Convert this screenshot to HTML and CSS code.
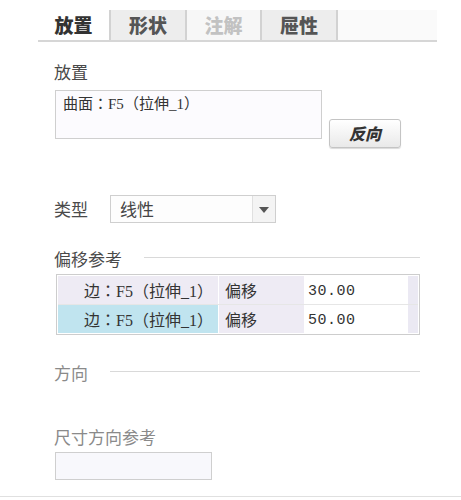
FILE: index.html
```html
<!DOCTYPE html>
<html>
<head>
<meta charset="utf-8">
<link rel="stylesheet" href="styles.css">
</head>
<body>
<div class="panel">
  <div class="tabs">
    <div class="tab active">放置</div>
    <div class="tab grey">形状</div>
    <div class="tab disabled">注解</div>
    <div class="tab grey">屉性</div>
    <div class="tab-fill"></div>
  </div>

  <div class="label top-label">放置</div>
  <div class="place-row">
    <div class="collector">曲面<span class="jp">：</span><span class="lat">F5</span><span class="jp">（</span>拉伸<span class="lat">_1</span><span class="jp">）</span></div>
    <div class="btn">反向</div>
  </div>

  <div class="type-row">
    <span class="label">类型</span>
    <div class="select">
      <span class="select-text">线性</span>
      <span class="select-arrow"></span>
    </div>
  </div>

  <div class="group-head"><span class="label">偏移参考</span><span class="rule"></span></div>
  <div class="table">
    <div class="row">
      <div class="c1">边<span class="jp">：</span><span class="lat">F5</span><span class="jp">（</span>拉伸<span class="lat">_1</span><span class="jp">）</span></div>
      <div class="c2">偏移</div>
      <div class="c3">30.00</div>
      <div class="c4"></div>
    </div>
    <div class="row">
      <div class="c1 sel">边<span class="jp">：</span><span class="lat">F5</span><span class="jp">（</span>拉伸<span class="lat">_1</span><span class="jp">）</span></div>
      <div class="c2">偏移</div>
      <div class="c3">50.00</div>
      <div class="c4"></div>
    </div>
  </div>

  <div class="group-head dir"><span class="label light">方向</span><span class="rule"></span></div>

  <div class="label light dim-label">尺寸方向参考</div>
  <div class="dim-box"></div>
</div>
<div class="bottom-line"></div>
</body>
</html>
```

FILE: styles.css
```css
html, body {
  margin: 0;
  padding: 0;
  background: #ffffff;
}
body {
  width: 461px;
  height: 500px;
  position: relative;
  font-family: "Noto Sans CJK SC", "Noto Sans", sans-serif;
  color: #444;
}
.panel {
  padding-left: 38px;
  padding-top: 10px;
  width: 400px;
}
.tabs {
  display: flex;
  height: 30px;
  border-bottom: 2px solid #d6d6d6;
  width: 399px;
}
.tab {
  height: 30px;
  line-height: 30px;
  font-size: 19px;
  font-weight: 900;
  text-align: center;
  color: #333;
  box-sizing: border-box;
}
.tab.active {
  width: 73px;
  background: #fff;
  border-right: 2px solid #d2d2d2;
}
.tab.grey {
  width: 76px;
  background: #ededed;
  color: #555;
  border-right: 2px solid #d2d2d2;
}
.tab.disabled {
  width: 75px;
  background: #f7f7f7;
  color: #c2c2c2;
  border-right: 2px solid #d2d2d2;
}
.tab-fill {
  flex: 1;
  background: #fafafa;
}
.label {
  font-size: 17px;
  line-height: 20px;
  color: #4a4a4a;
}
.label.light {
  color: #8a8a8a;
}
.jp {
  font-family: "Noto Sans CJK JP", sans-serif;
}
.lat {
  font-family: "Liberation Serif", serif;
}
.top-label {
  margin-top: 20px;
  padding-left: 16px;
}
.place-row {
  display: flex;
  align-items: flex-start;
  margin-top: 8px;
  padding-left: 17px;
}
.collector {
  width: 267px;
  height: 49px;
  box-sizing: border-box;
  border: 1px solid #cfcfcf;
  background: #fcfbfe;
  font-size: 15px;
  line-height: 20px;
  padding: 2px 7px;
  color: #333;
}
.btn {
  margin-left: 7px;
  margin-top: 29px;
  width: 72px;
  height: 29px;
  box-sizing: border-box;
  border: 1px solid #c4c4c4;
  border-radius: 3px;
  background: linear-gradient(#ffffff, #e9e9e9);
  box-shadow: 0 1px 1px rgba(0,0,0,0.15);
  font-size: 16px;
  font-weight: 900;
  font-style: italic;
  text-align: center;
  line-height: 27px;
  color: #333;
}
.type-row {
  display: flex;
  align-items: center;
  margin-top: 47px;
  padding-left: 16px;
  height: 28px;
}
.select {
  margin-left: 22px;
  width: 166px;
  height: 28px;
  box-sizing: border-box;
  border: 1px solid #cfcfcf;
  display: flex;
  background: #fdfdfd;
}
.select-text {
  flex: 1;
  font-size: 17px;
  line-height: 26px;
  padding-left: 9px;
  color: #444;
}
.select-arrow {
  width: 22px;
  border-left: 1px solid #e0e0e0;
  background: #f4f4f4;
  position: relative;
}
.select-arrow::after {
  content: "";
  position: absolute;
  left: 6px;
  top: 11px;
  border-left: 5px solid transparent;
  border-right: 5px solid transparent;
  border-top: 6px solid #555;
}
.group-head {
  display: flex;
  align-items: center;
  margin-top: 26px;
  padding-left: 16px;
  width: 366px;
}
.group-head .rule {
  flex: 1;
  height: 1px;
  background: #d9d9d9;
  margin-left: 22px;
  margin-top: -3px;
}
.table {
  margin-top: 5px;
  margin-left: 18px;
  width: 364px;
  border: 1px solid #cdcdcd;
  box-sizing: border-box;
  padding: 1px;
  background: #fff;
}
.row {
  display: flex;
  height: 28px;
  border-bottom: 1px solid #e6e6e6;
}
.row:last-child {
  border-bottom: none;
}
.row > div {
  font-size: 16px;
  line-height: 28px;
  color: #333;
  box-sizing: border-box;
  white-space: nowrap;
}
.c1 {
  width: 160px;
  background: #eeebf4;
  padding-left: 26px;
}
.c1.sel {
  background: #c0e4ef;
}
.c2 {
  width: 86px;
  background: #eeebf4;
  padding-left: 6px;
  border-left: 1px solid #fff;
}
.row > .c3 {
  width: 104px;
  background: #fff;
  padding-left: 4px;
  padding-top: 3px;
  line-height: 25px;
  font-family: "Liberation Mono", monospace;
  font-size: 15px;
  letter-spacing: 0.5px;
}
.c4 {
  flex: 1;
  background: #ebe9f3;
}
.group-head.dir {
  margin-top: 28px;
}
.dim-label {
  margin-top: 44px;
  padding-left: 16px;
}
.dim-box {
  margin-top: 5px;
  margin-left: 17px;
  width: 157px;
  height: 28px;
  box-sizing: border-box;
  border: 1px solid #cfcfcf;
  background: #f8f8fc;
}
.bottom-line {
  position: absolute;
  left: 0;
  right: 0;
  top: 496px;
  height: 1px;
  background: #e0e0e0;
}
```
